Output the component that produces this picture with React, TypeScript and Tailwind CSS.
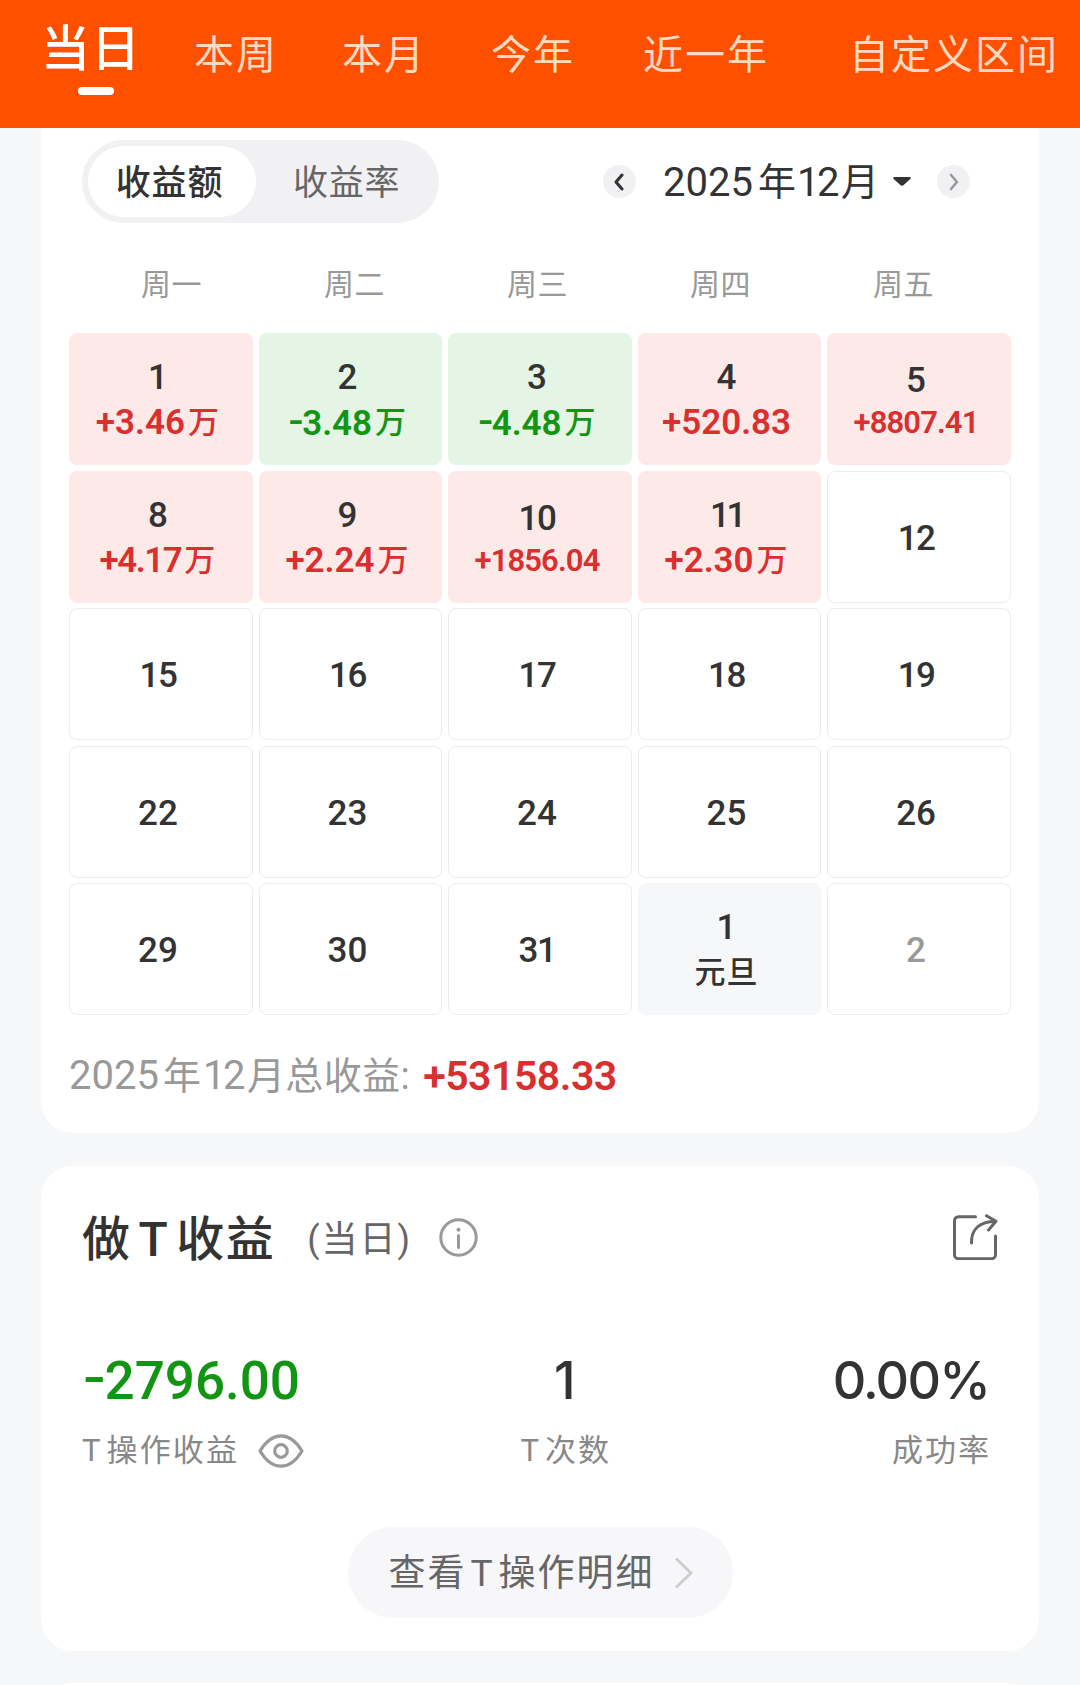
import clsx from 'clsx';

type Day = {
  day: string;
  value?: string;
  unit?: string;
  small?: boolean;
  kind?: 'up' | 'down' | 'holiday' | 'next';
};

const tabs = [
  { label: '本周', className: 'ml-[53px]' },
  { label: '本月', className: 'ml-[64px]' },
  { label: '今年', className: 'ml-[65px]' },
  { label: '近一年', className: 'ml-[68px]' },
  { label: '自定义区间', className: 'ml-[80px]' },
];

const weekdays = ['周一', '周二', '周三', '周四', '周五'];

const days: Day[] = [
  { day: '1', value: '+3.46', unit: '万', kind: 'up' },
  { day: '2', value: '-3.48', unit: '万', kind: 'down' },
  { day: '3', value: '-4.48', unit: '万', kind: 'down' },
  { day: '4', value: '+520.83', kind: 'up' },
  { day: '5', value: '+8807.41', kind: 'up', small: true },
  { day: '8', value: '+4.17', unit: '万', kind: 'up' },
  { day: '9', value: '+2.24', unit: '万', kind: 'up' },
  { day: '10', value: '+1856.04', kind: 'up', small: true },
  { day: '11', value: '+2.30', unit: '万', kind: 'up' },
  { day: '12' },
  { day: '15' },
  { day: '16' },
  { day: '17' },
  { day: '18' },
  { day: '19' },
  { day: '22' },
  { day: '23' },
  { day: '24' },
  { day: '25' },
  { day: '26' },
  { day: '29' },
  { day: '30' },
  { day: '31' },
  { day: '1', unit: '元旦', kind: 'holiday' },
  { day: '2', kind: 'next' },
];

// Inter has the wider minus sign, "case" lifts it to the middle of the digits
function Amount({ text }: { text: string }) {
  if (!text.startsWith('-')) return <span>{text}</span>;
  return (
    <span>
      <span className="tracking-[-2px] [font-family:Inter,sans-serif] [font-feature-settings:'case']">-</span>
      {text.slice(1)}
    </span>
  );
}

function DayCell({ item }: { item: Day }) {
  const { day, value, unit, small, kind } = item;
  return (
    <div
      className={clsx(
        'flex h-[132px] flex-col items-center justify-center rounded-lg pr-[6px] font-medium text-[#333]',
        kind === 'up' && 'bg-[#fde9e8]',
        kind === 'down' && 'bg-[#e4f4e5]',
        kind === 'holiday' && 'bg-[#f6f7f9]',
        (!kind || kind === 'next') && 'border border-[#ececee]',
        kind === 'next' && 'text-[#999]'
      )}
    >
      <div
        className={clsx(
          'h-[44px] text-[35px]',
          value || unit ? 'leading-[46px]' : 'leading-[48px]',
          day === '11' ? 'tracking-[-3.5px]' : day.length > 1 && day.includes('1') && 'tracking-[-1.5px]'
        )}
      >
        {day}
      </div>
      {(value || unit) && (
        <div
          className={clsx(
            'flex items-center whitespace-nowrap font-semibold',
            small ? 'h-[38px] text-[31px] leading-[42px] tracking-[-0.9px]' : 'h-[44px] text-[35px] leading-[48px]',
            kind === 'up' && 'text-[#d92f2f]',
            kind === 'down' && 'text-[#129512]'
          )}
        >
          <div className={clsx('flex items-center pt-1', value === '+4.17' && 'tracking-[-1.5px]')}>
            {value && <Amount text={value} />}
            {unit && <span className={clsx('font-medium text-[31px] tracking-[1px]', value && 'ml-[3px]')}>{unit}</span>}
          </div>
        </div>
      )}
    </div>
  );
}

function InfoIcon() {
  return (
    <svg className="ml-[27px] h-[39px] w-[39px]" viewBox="0 0 39 39" fill="none" stroke="#999" strokeWidth="3">
      <circle cx="19.5" cy="19.5" r="17.7" />
      <path d="M19.5 17.5v12" strokeLinecap="round" />
      <circle cx="19.5" cy="11.8" r="2" fill="#999" stroke="none" />
    </svg>
  );
}

function ShareIcon() {
  return (
    <svg className="h-[46px] w-[46px]" viewBox="0 0 46 46" fill="none" stroke="#666" strokeWidth="3" strokeLinecap="round" strokeLinejoin="round">
      <path d="M23.5 2.7H6.5a4 4 0 0 0-4 4v34a4 4 0 0 0 4 4h33a4 4 0 0 0 4-4V22" />
      <path d="M19.5 29C19 15 28 7.5 43 7.5" />
      <path d="M34.5 1.8 44 7.3 36.5 16" />
    </svg>
  );
}

function EyeIcon() {
  return (
    <svg className="ml-[19px] h-[36px] w-[46px]" viewBox="0 0 46 36" fill="none" stroke="#999" strokeWidth="3.2" strokeLinejoin="round">
      <path d="M2 18C8 8 15 2.8 23 2.8S38 8 44 18C38 28 31 33.2 23 33.2S8 28 2 18Z" />
      <circle cx="23" cy="18" r="6.3" />
    </svg>
  );
}

export default function App() {
  return (
    <div className="flex h-[1685px] w-[1080px] flex-col overflow-hidden bg-[#f6f7f9] text-[#333] [font-family:Roboto,'Noto_Sans_CJK_SC',sans-serif]">
      {/* Period tabs */}
      <div className="flex h-[128px] shrink-0 items-start whitespace-nowrap bg-[#ff5000] pl-[41px] text-white">
        <div className="flex flex-col items-center pt-[15px]">
          <div className="h-[72px] text-[49px] font-medium leading-[70px] tracking-[1px]">当日</div>
          <div className="ml-[10px] h-2 w-9 rounded-full bg-white" />
        </div>
        {tabs.map((tab) => (
          <div key={tab.label} className={clsx('pt-[26px] text-[40px] leading-[60px] tracking-[2px] text-[#ffd9c4]', tab.className)}>
            {tab.label}
          </div>
        ))}
      </div>

      {/* Profit calendar */}
      <div className="mx-[41px] h-[1005px] shrink-0 rounded-b-[32px] bg-white pt-3">
        <div className="flex h-[83px] items-center pl-[41px]">
          <div className="flex h-[83px] w-[357px] items-center rounded-full bg-[#f1f1f4] pl-[6px] text-[35px] tracking-[0.8px]">
            <div className="flex h-[71px] w-[168px] items-center justify-center rounded-full bg-white pr-[5px] pt-[5px] font-medium">收益额</div>
            <div className="ml-[37px] pt-[5px] text-[#666]">收益率</div>
          </div>
          <div className="ml-[164px] flex h-[33px] w-[33px] items-center justify-center rounded-full bg-[#f1f1f4]">
            <svg className="mr-[2px] h-[18px] w-[12px]" viewBox="0 0 12 18" fill="none" stroke="#333" strokeWidth="3" strokeLinecap="round" strokeLinejoin="round">
              <path d="M9 2 3 9l6 7" />
            </svg>
          </div>
          <div className="ml-[27px] flex w-[214px] items-center whitespace-nowrap text-[38px] leading-[56px]">
            <span className="pt-[2px] text-[40px]">2025</span>
            <span className="ml-[5px]">年</span>
            <span className="ml-[1px] pt-[2px] text-[40px] tracking-[-2.5px]">12</span>
            <span className="ml-[4px]">月</span>
          </div>
          <svg className="ml-[16px] h-[9px] w-[18px]" viewBox="0 0 18 9" fill="#333">
            <path d="M1.5 0h15c1.2 0 1.7 1.2.8 2L11 7.8a3 3 0 0 1-4 0L.7 2C-.2 1.2.3 0 1.5 0Z" />
          </svg>
          <div className="ml-[26px] flex h-[33px] w-[33px] items-center justify-center rounded-full bg-[#f1f1f4]">
            <svg className="h-[18px] w-[12px]" viewBox="0 0 12 18" fill="none" stroke="#999" strokeWidth="2.6" strokeLinecap="round" strokeLinejoin="round">
              <path d="m3 2 6 7-6 7" />
            </svg>
          </div>
        </div>

        <div className="ml-[39px] mt-[40px] grid h-[70px] w-[915px] grid-cols-5 text-center text-[30px] leading-[44px] tracking-[0.6px] text-[#999]">
          {weekdays.map((name) => (
            <div key={name}>{name}</div>
          ))}
        </div>

        <div className="ml-[28px] grid w-[942px] grid-cols-5 gap-[5.6px]">
          {days.map((item, i) => (
            <DayCell key={i} item={item} />
          ))}
        </div>

        <div className="ml-[28px] mt-[33px] flex h-[56px] items-center whitespace-nowrap text-[38px] leading-[56px] text-[#999]">
          <span className="text-[40px]">2025</span>
          <span className="ml-[4px]">年</span>
          <span className="ml-[2px] text-[40px] tracking-[-2.5px]">12</span>
          <span className="ml-[4px] tracking-[0.4px]">月总收益:</span>
          <span className="ml-[13px] text-[41px] font-semibold tracking-[-0.5px] text-[#d92f2f]">+53158.33</span>
        </div>
      </div>

      {/* T trading profit */}
      <div className="mx-[41px] mt-[33px] h-[485px] shrink-0 rounded-[32px] bg-white px-[41px]">
        <div className="flex h-[142px] items-center">
          <div className="flex items-center pt-[5px] text-[48px] font-medium tracking-[1.5px]">
            <span>做</span>
            <span className="mx-[7px]">T</span>
            <span>收益</span>
          </div>
          <div className="ml-[32px] pt-[5px] text-[36px] tracking-[2px] text-[#666]">(当日)</div>
          <InfoIcon />
          <div className="ml-auto">
            <ShareIcon />
          </div>
        </div>

        <div className="mt-[38px] flex justify-between">
          <div>
            <div className="h-[83px] text-[53px] font-medium leading-[69px] text-[#129512]">
              <Amount text="-2796.00" />
            </div>
            <div className="flex h-[44px] items-center text-[31px] tracking-[2.1px] text-[#888]">
              <span className="mr-[4px]">T</span>操作收益
              <EyeIcon />
            </div>
          </div>
          <div className="mr-[5px] text-center">
            <div className="h-[83px] pr-[2px] text-[52px] font-medium leading-[69px] [font-family:Inter,sans-serif]">1</div>
            <div className="flex h-[44px] items-center text-[31px] tracking-[2px] text-[#888]">
              <span className="mr-[4px]">T</span>次数
            </div>
          </div>
          <div className="mr-[7px] text-right">
            <div className="h-[83px] pr-[2px] text-[52px] font-medium leading-[69px] tracking-[-1.8px] [font-family:Inter,sans-serif]">0.00%</div>
            <div className="h-[44px] text-[31px] leading-[44px] tracking-[2px] text-[#888]">成功率</div>
          </div>
        </div>

        <div className="mx-auto mt-[54px] flex h-[91px] w-[385px] items-center rounded-full bg-[#f7f7fa] pl-[41px] text-[37px] tracking-[2px] text-[#666]">
          <span className="pt-[3px]">
            查看<span className="mx-[4px]">T</span>操作明细
          </span>
          <svg className="ml-[19px] h-[32px] w-[20px]" viewBox="0 0 20 32" fill="none" stroke="#ccc" strokeWidth="2.8">
            <path d="m2 1.5 15 14.5-15 14.5" />
          </svg>
        </div>
      </div>

      {/* Top edge of the next card */}
      <div className="mx-[41px] mt-[32px] h-[200px] shrink-0 rounded-t-[32px] bg-white" />
    </div>
  );
}
